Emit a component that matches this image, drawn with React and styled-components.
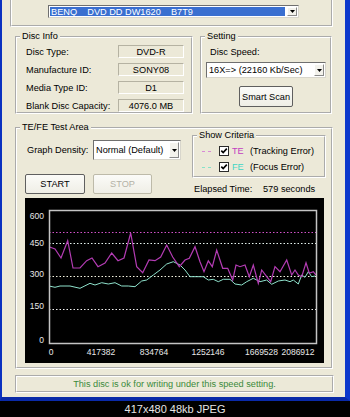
import React from 'react'
import styled, { createGlobalStyle } from 'styled-components'

const GlobalStyle = createGlobalStyle`
  html, body {
    margin: 0;
    padding: 0;
    background: #000;
  }
  body {
    font-family: "Liberation Sans", Arial, sans-serif;
    font-size: 9.2px;
    color: #000;
  }
`

const Page = styled.div`
  width: 350px;
  height: 417px;
  overflow: hidden;
  background: #000;
  display: flex;
  flex-direction: column;
`

const Window = styled.div`
  height: 401px;
  box-sizing: border-box;
  background: #ece9d8;
  border-left: 2px solid #0b31c0;
  border-right: 5px solid #0c38cc;
  border-bottom: 4px solid #0a2aa8;
  display: flex;
  flex-direction: column;
`

const Caption = styled.div`
  flex: 1;
  display: flex;
  align-items: center;
  justify-content: center;
  color: #e6e6e6;
  font-size: 11px;
`

const Group = styled.div`
  position: relative;
  box-sizing: border-box;
  border: 2px groove #fff;
  width: ${p => p.$w}px;
  height: ${p => p.$h}px;
  margin-left: ${p => p.$left || 0}px;
  margin-top: ${p => p.$top || 0}px;
  flex-shrink: 0;
`

const Legend = styled.span`
  position: absolute;
  top: -8px;
  left: 3px;
  padding: 0 2px;
  line-height: 12px;
  background: #ece9d8;
`

const DriveGroup = styled(Group)`
  border-top: none;
  padding: 5px 0 0 36px;
`

const Row = styled.div`
  display: flex;
  gap: 7px;
  margin: 9px 0 0 13px;
`

const InfoGrid = styled.div`
  display: grid;
  grid-template-columns: 92px 66px;
  grid-auto-rows: 13px;
  row-gap: 5px;
  padding: 7px 0 0 9px;
  align-items: center;
`

const ValueBox = styled.div`
  height: 13px;
  box-sizing: border-box;
  border: 1px solid;
  border-color: #b5b2a2 #fff #fff #b5b2a2;
  display: flex;
  align-items: center;
  justify-content: center;
`

const SettingBody = styled.div`
  display: flex;
  flex-direction: column;
  padding: 8px 4px 0;
`

const Label = styled.span`
  line-height: 12px;
  margin-left: ${p => p.$indent || 0}px;
  width: ${p => (p.$w ? `${p.$w}px` : 'auto')};
  flex-shrink: 0;
  white-space: nowrap;
`

const Combo = styled.div`
  display: flex;
  box-sizing: border-box;
  width: ${p => p.$w}px;
  height: ${p => p.$h}px;
  margin-top: ${p => p.$top || 0}px;
  background: #fff;
  border: 1px solid;
  border-color: #6f6f6f #d8d6cc #d8d6cc #6f6f6f;
`

const ComboText = styled.div`
  flex: 1;
  display: flex;
  align-items: center;
  white-space: pre;
  padding-left: 1px;
  margin: 1px;
  background: ${p => (p.$selected ? '#3a6fd0' : 'transparent')};
  color: ${p => (p.$selected ? '#fff' : '#000')};
  overflow: hidden;
`

const DropButton = styled.div`
  width: 10px;
  margin: 1px;
  box-sizing: border-box;
  background: #f3f2ec;
  border: 1px solid;
  border-color: #fff #8a8a8a #8a8a8a #fff;
  display: flex;
  align-items: center;
  justify-content: center;
`

const Button = styled.button`
  width: ${p => p.$w}px;
  height: ${p => p.$h}px;
  padding: 0;
  font: inherit;
  border-radius: 2px;
  background: linear-gradient(#fbfbf8, #efeee6);
  border: 1px solid ${p => (p.disabled ? '#bdbaa9' : '#5f5f5f')};
  color: ${p => (p.disabled ? '#b4b2a6' : '#000')};
  flex-shrink: 0;
`

const Centered = styled.div`
  display: flex;
  justify-content: center;
  margin-top: 8px;
`

const TopArea = styled.div`
  display: flex;
  height: 69px;
`

const LeftCol = styled.div`
  width: 175px;
  box-sizing: border-box;
  padding: 11px 0 0 8px;
  display: flex;
  flex-direction: column;
`

const DensityRow = styled.div`
  display: flex;
  align-items: center;
  padding-left: 2px;
`

const ButtonRow = styled.div`
  display: flex;
  gap: 8px;
  margin-top: 14px;
`

const RightCol = styled.div`
  display: flex;
  flex-direction: column;
`

const CriteriaBody = styled.div`
  display: flex;
  flex-direction: column;
  padding: 6px 0 0 6px;
`

const CriteriaRow = styled.div`
  display: flex;
  align-items: center;
  height: 16px;
`

const Dash = styled.span`
  width: 9px;
  margin: 0 8px 0 2px;
  border-top: 1px dashed ${p => p.$color};
`

const CheckBox = styled.span`
  width: 10px;
  height: 10px;
  box-sizing: border-box;
  border: 1px solid #2b2b2b;
  background: #fff;
  margin-right: 3px;
  display: flex;
`

const Code = styled.span`
  width: 18px;
  color: ${p => p.$color};
`

const Elapsed = styled.div`
  display: flex;
  margin: 5px 0 0 2px;
  line-height: 12px;
`

const Chart = styled.svg`
  display: block;
  margin-left: 8px;
`

const StatusPanel = styled(Group)`
  display: flex;
  align-items: center;
  justify-content: center;
  color: #3b8a3b;
`

const Arrow = () => (
  <svg width="5" height="3" viewBox="0 0 5 3">
    <path d="M0 0h5L2.5 3z" fill="#000" />
  </svg>
)

const Tick = () => (
  <svg width="8" height="8" viewBox="0 0 8 8">
    <path d="M1.3 3.6 3.2 5.6 6.8 1.6" fill="none" stroke="#000" strokeWidth="1.6" />
  </svg>
)

const discInfo = [
  ['Disc Type:', 'DVD-R'],
  ['Manufacture ID:', 'SONY08'],
  ['Media Type ID:', 'D1'],
  ['Blank Disc Capacity:', '4076.0 MB']
]

// traced from the scan, page coordinates
const tePoints = [
  [49, 246.7], [55, 249], [61, 258], [67.7, 240.7], [73, 268], [80, 268], [86.7, 260.7],
  [92, 258], [98, 266.7], [105, 263], [111.7, 253], [118, 260.7], [124, 258], [130.7, 233],
  [136.7, 266.7], [142.7, 272.7], [149, 260], [155, 260.7], [160.7, 257], [166.7, 245],
  [172.7, 257], [179.3, 266.7], [185, 260], [189.3, 258.3], [195, 246.7], [200, 261.7],
  [204, 271.7], [208.3, 260.7], [212.3, 266.7], [216.7, 250], [222.7, 268.3], [227.7, 268.3],
  [232.7, 280], [236, 265], [240, 266.7], [245, 265], [249.3, 276.7], [253.3, 265],
  [258.3, 283.3], [261.7, 270], [266.7, 276.7], [270.7, 281.7], [275, 266.7], [280, 271.7],
  [286.7, 260], [291.7, 275], [295, 270], [298.3, 275], [301.7, 276.7], [306, 262.7],
  [309.3, 273.3], [313.3, 271.7], [316, 275]
]

const fePoints = [
  [49, 286], [55, 287.3], [60, 286], [70, 286], [80, 288.3], [90, 283.3], [95, 285],
  [101.7, 282.7], [108.3, 284], [115, 282.7], [121.7, 286], [128.3, 286], [135, 286.7],
  [141.7, 281], [146.7, 280], [153.3, 275], [160, 270], [166.7, 264], [173.3, 261.7],
  [180, 265], [185, 270], [190, 276.7], [196.7, 276.7], [203.3, 276.7], [208.3, 280],
  [213.3, 279.3], [218.3, 281.7], [223.3, 279.3], [230, 279.3], [235, 284], [241.7, 285],
  [246.7, 281.7], [253.3, 278.3], [260, 281.7], [266.7, 280], [271.7, 284.3], [278.3, 281],
  [285, 280], [290, 281.7], [293.3, 280], [298.3, 284], [301.7, 275], [305, 277.3],
  [308.3, 271.7], [311.7, 276.7], [315, 276]
]

const toSvg = pts => pts.map(([x, y]) => `${x - 25},${y - 198}`).join(' ')

const yLabels = [['600', 21], ['450', 48], ['300', 79], ['150', 111], ['0', 144.5]]
const xLabels = [
  ['0', 26], ['417382', 76], ['834764', 129], ['1252146', 183], ['1669528', 236.5], ['2086912', 273]
]

const ErrorChart = () => (
  <Chart width="299" height="165" viewBox="0 0 299 165">
    <rect width="299" height="165" fill="#000" />
    <line x1="24" y1="34.5" x2="291" y2="34.5" stroke="#d050c8" strokeDasharray="1.5 2" />
    <line x1="24" y1="45.5" x2="291" y2="45.5" stroke="#e4f2ee" strokeDasharray="1.5 2" />
    <line x1="24" y1="78.5" x2="291" y2="78.5" stroke="#f2f2e0" strokeDasharray="1.5 2" />
    <line x1="24" y1="111.5" x2="291" y2="111.5" stroke="#f2f2f2" strokeDasharray="1.5 2" />
    <polyline points={toSvg(fePoints)} fill="none" stroke="#8fe2cc" strokeWidth="1" />
    <polyline points={toSvg(tePoints)} fill="none" stroke="#b43cb4" strokeWidth="1.2" />
    <rect x="24.5" y="12.5" width="267" height="133" fill="none" stroke="#c4c4c4" strokeWidth="1.5" />
    {yLabels.map(([t, y]) => (
      <text key={t} x="19" y={y} fill="#e8e8e8" fontSize="8.5" textAnchor="end"
        fontFamily="Liberation Sans, Arial, sans-serif">{t}</text>
    ))}
    {xLabels.map(([t, x]) => (
      <text key={t} x={x} y="157" fill="#e8e8e8" fontSize="8.5" textAnchor="middle"
        fontFamily="Liberation Sans, Arial, sans-serif">{t}</text>
    ))}
  </Chart>
)

const App = () => {
  return (
    <Page>
      <GlobalStyle />
      <Window>
        <DriveGroup $w={323} $h={27} $left={8}>
          <Combo $w={251} $h={13}>
            <ComboText $selected>{'BENQ    DVD DD DW1620    B7T9'}</ComboText>
            <DropButton><Arrow /></DropButton>
          </Combo>
        </DriveGroup>

        <Row>
          <Group $w={178} $h={78}>
            <Legend>Disc Info</Legend>
            <InfoGrid>
              {discInfo.map(([label, value]) => (
                <React.Fragment key={label}>
                  <Label>{label}</Label>
                  <ValueBox>{value}</ValueBox>
                </React.Fragment>
              ))}
            </InfoGrid>
          </Group>
          <Group $w={132} $h={78}>
            <Legend>Setting</Legend>
            <SettingBody>
              <Label $indent={4}>Disc Speed:</Label>
              <Combo $w={120} $h={16} $top={4}>
                <ComboText>{'16X=> (22160 Kb/Sec)'}</ComboText>
                <DropButton><Arrow /></DropButton>
              </Combo>
              <Centered>
                <Button $w={54} $h={21}>Smart Scan</Button>
              </Centered>
            </SettingBody>
          </Group>
        </Row>

        <Group $w={318} $h={242} $left={13} $top={13}>
          <Legend>TE/FE Test Area</Legend>
          <TopArea>
            <LeftCol>
              <DensityRow>
                <Label $w={66}>Graph Density:</Label>
                <Combo $w={88} $h={20}>
                  <ComboText>Normal (Default)</ComboText>
                  <DropButton><Arrow /></DropButton>
                </Combo>
              </DensityRow>
              <ButtonRow>
                <Button $w={60} $h={20}>START</Button>
                <Button $w={59} $h={20} disabled>STOP</Button>
              </ButtonRow>
            </LeftCol>
            <RightCol>
              <Group $w={134} $h={43} $top={6}>
                <Legend>Show Criteria</Legend>
                <CriteriaBody>
                  <CriteriaRow>
                    <Dash $color="#d88ad6" />
                    <CheckBox><Tick /></CheckBox>
                    <Code $color="#c23fc0">TE</Code>
                    <span>(Tracking Error)</span>
                  </CriteriaRow>
                  <CriteriaRow>
                    <Dash $color="#86e2c8" />
                    <CheckBox><Tick /></CheckBox>
                    <Code $color="#3fd6c4">FE</Code>
                    <span>(Focus Error)</span>
                  </CriteriaRow>
                </CriteriaBody>
              </Group>
              <Elapsed>
                <Label $w={69}>Elapsed Time:</Label>
                <span>579 seconds</span>
              </Elapsed>
            </RightCol>
          </TopArea>
          <ErrorChart />
        </Group>

        <StatusPanel $w={319} $h={18} $left={13} $top={6}>
          This disc is ok for writing under this speed setting.
        </StatusPanel>
      </Window>
      <Caption>417x480 48kb JPEG</Caption>
    </Page>
  )
}

export default App
